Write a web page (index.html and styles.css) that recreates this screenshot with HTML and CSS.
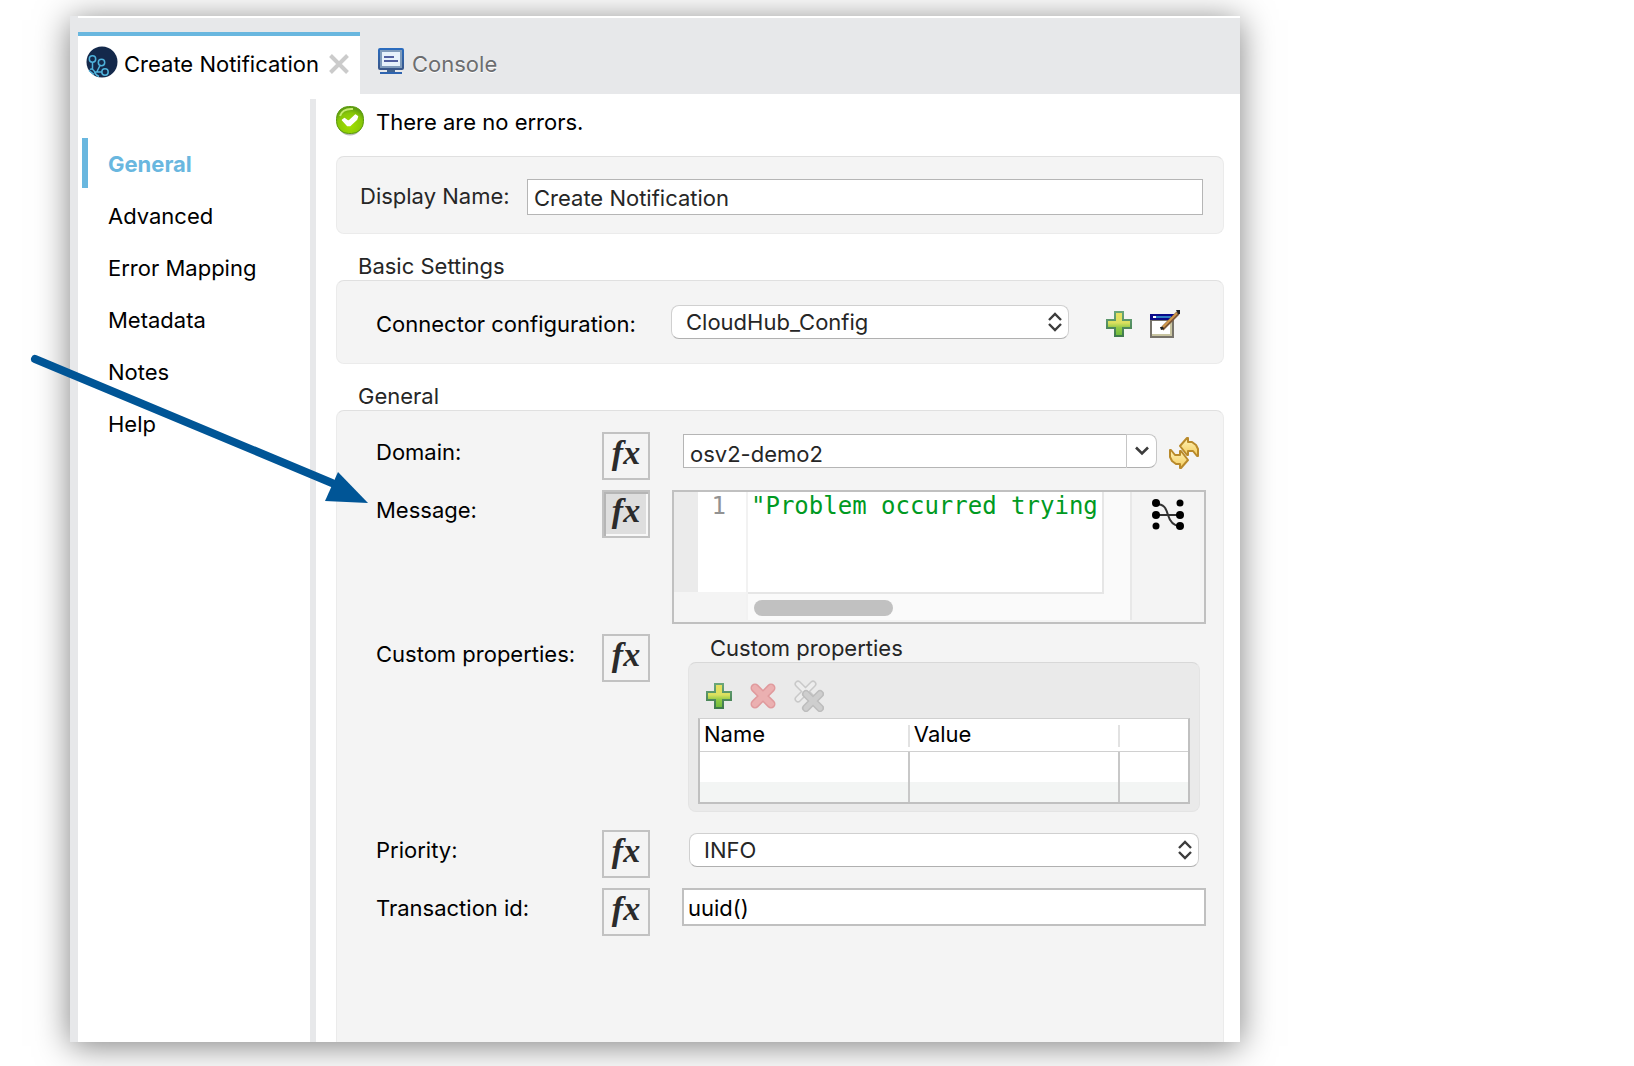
FILE: index.html
```
<!DOCTYPE html>
<html lang="en">
<head>
<meta charset="utf-8">
<title>Create Notification</title>
<link rel="stylesheet" href="styles.css">
</head>
<body>
<svg class="defs" width="0" height="0" aria-hidden="true">
  <defs>
    <linearGradient id="green" x1="0" y1="0" x2="0" y2="1"><stop offset="0" stop-color="#e8e060"/><stop offset=".45" stop-color="#dbe060"/><stop offset=".65" stop-color="#93cb47"/><stop offset="1" stop-color="#6cba3a"/></linearGradient>
    <linearGradient id="greenEdge" x1="0" y1="0" x2="0" y2="1"><stop offset="0" stop-color="#6aa679"/><stop offset="1" stop-color="#3f7a4c"/></linearGradient>
    <linearGradient id="screen" x1="0" y1="0" x2="0" y2="1"><stop offset="0" stop-color="#2a6cc0"/><stop offset="1" stop-color="#3a5688"/></linearGradient>
    <linearGradient id="gold" x1="0" y1="0" x2="0" y2="1"><stop offset="0" stop-color="#fff3b8"/><stop offset="1" stop-color="#f3cb5c"/></linearGradient>
    <radialGradient id="ok" cx=".5" cy=".7" r=".65"><stop offset="0" stop-color="#a2e000"/><stop offset=".7" stop-color="#88c708"/><stop offset="1" stop-color="#5d9c10"/></radialGradient>
    <symbol id="plus" viewBox="0 0 26 26"><path d="M9 1h8v8h8v8h-8v8H9v-8H1V9h8z" fill="url(#green)" stroke="url(#greenEdge)" stroke-width="2"/></symbol>
    <symbol id="updown" viewBox="0 0 14 20"><path d="M1 8l6-6 6 6M1 12l6 6 6-6" fill="none" stroke="#3c3c3c" stroke-width="2.4"/></symbol>
  </defs>
</svg>

<div class="window">
  <div class="tabs" role="tablist">
    <div class="tab tab-active" role="tab" aria-selected="true">
      <svg class="tab-logo" width="32" height="32" viewBox="0 0 32 32"><circle cx="16" cy="16" r="15.5" fill="#14294b"/><g fill="none" stroke="#4fb3dc" stroke-width="1.5"><circle cx="6.500" cy="13" r="3.200"/><circle cx="15.500" cy="16.500" r="3.200"/><circle cx="19" cy="26" r="3.200"/><path d="M6.500 16.200v7M14 19.500l-3 6M16 26H9M4 23.500c1.500-1 3.500 0 4.500 2 .5 2 2 4 4.500 5M3 24.500l5 4"/></g></svg>
      <span>Create Notification</span>
      <button class="close" aria-label="Close tab"><svg width="20" height="20" viewBox="0 0 20 20"><path d="M1.500 1.500l17 17M18.500 1.500l-17 17" stroke="#cbcbcb" stroke-width="4"/></svg></button>
    </div>
    <div class="tab tab-idle" role="tab" aria-selected="false">
      <svg width="26" height="26" viewBox="0 0 26 26"><rect width="26" height="22" rx="2" fill="url(#screen)"/><rect x="2" y="2" width="22" height="18" fill="#7f9bbb"/><rect x="4" y="4" width="18" height="14" fill="#e6f1fb"/><path d="M6 9h10M6 13h14" stroke="#5160a0" stroke-width="2"/><path d="M9 22h8v2H9z" fill="#42648f"/><path d="M2 24h22v2H2z" fill="#2f64b0"/></svg>
      <span>Console</span>
    </div>
  </div>

  <div class="body">
    <nav class="side">
      <a class="side-link current" href="#general">General</a>
      <a class="side-link" href="#advanced">Advanced</a>
      <a class="side-link" href="#errors">Error Mapping</a>
      <a class="side-link" href="#metadata">Metadata</a>
      <a class="side-link" href="#notes">Notes</a>
      <a class="side-link" href="#help">Help</a>
    </nav>

    <main class="main">
      <div class="status">
        <svg width="28" height="30" viewBox="0 0 28 30"><ellipse cx="14" cy="16" rx="13" ry="13.500" fill="#b9bdb4"/><rect x=".5" y=".5" width="27" height="27" rx="12" fill="url(#ok)" stroke="#5d9c10"/><path d="M4 10C6 4 11 2.500 17 3" fill="none" stroke="#c6ec70" stroke-width="2"/><path d="M6.500 14l2-1.500 4 3 7-6.500 2 1.500-1 3-6.500 6h-2.500z" fill="#fff" stroke="#fff" stroke-width="1.500" stroke-linejoin="round"/></svg>
        <span>There are no errors.</span>
      </div>

      <section class="box name-box">
        <label for="display">Display Name:</label>
        <input class="input" id="display" type="text" value="Create Notification">
      </section>

      <h2 class="legend">Basic Settings</h2>
      <section class="box config-box">
        <label class="config-label" for="config">Connector configuration:</label>
        <div class="select config-select">
          <select id="config"><option>CloudHub_Config</option></select>
          <svg width="14" height="20"><use href="#updown"/></svg>
        </div>
        <div class="config-tools">
          <button aria-label="Add configuration"><svg width="26" height="26"><use href="#plus"/></svg></button>
          <button aria-label="Edit configuration"><svg width="30" height="28" viewBox="0 0 30 28"><path d="M1 10h22v17H1z" fill="#fff" stroke="#77736a" stroke-width="2"/><path d="M2 24h20v2H2zM20 12h2v13h-2z" fill="#c8c4a0"/><path d="M0 4h24v6H0z" fill="#0a0a8a"/><path d="M6 6h15v2H6z" fill="#2f7fc4"/><path d="M3 6h3v2H3z" fill="#fff"/><path d="M12 19L28 3" stroke="#7c5636" stroke-width="4"/><path d="M13 17L27 3" stroke="#d29a4c" stroke-width="2"/><path d="M10 17l3 0 1 2-3 1zM26 0h4v4h-2z" fill="#222"/></svg></button>
        </div>
      </section>

      <h2 class="legend">General</h2>
      <section class="box general-box">
        <div class="row">
          <label for="domain">Domain:</label>
          <button class="fx" aria-label="Domain expression">fx</button>
          <div class="domain">
            <input id="domain" type="text" value="osv2-demo2">
            <button class="drop" aria-label="Show domains"><svg width="14" height="10" viewBox="0 0 14 10"><path d="M1 1.500l6 6 6-6" fill="none" stroke="#3c3c3c" stroke-width="2.600"/></svg></button>
            <button class="refresh" aria-label="Refresh domains"><svg width="30" height="32" viewBox="0 0 30 32"><g fill="url(#gold)" stroke="#b98a2b" stroke-width="2" stroke-linejoin="round"><path d="M11 9l7-8h1v4h4l4 3 2 4v7h-1l-4-5h-5v4h-1z"/><path d="M19 23l-7 8h-1v-4H7l-4-3-2-4v-7h1l4 5h5v-4h1z"/></g></svg></button>
          </div>
        </div>

        <div class="row">
          <label for="message">Message:</label>
          <button class="fx fx-on" aria-label="Message expression" aria-pressed="true">fx</button>
          <div class="editor">
            <div class="fold"></div>
            <div class="line-no">1</div>
            <div class="pane">
              <textarea id="message" wrap="off" spellcheck="false">"Problem occurred trying</textarea>
              <div class="scroll"><div class="thumb"></div></div>
            </div>
            <button class="map" aria-label="Open mapping"><svg width="32" height="32" viewBox="0 0 32 32"><path d="M4 5c8 0 10 4 12 11s5 11 12 11M4 16h24" fill="none" stroke="#333" stroke-width="2"/><g fill="#000"><circle cx="4" cy="4" r="4"/><circle cx="28" cy="4" r="3.500"/><circle cx="4" cy="16" r="4"/><circle cx="28" cy="16" r="4"/><circle cx="4" cy="27" r="3.500"/><circle cx="28" cy="27" r="4"/></g></svg></button>
          </div>
        </div>

        <div class="row">
          <span class="label">Custom properties:</span>
          <button class="fx" aria-label="Custom properties expression">fx</button>
          <div class="custom">
            <h3 class="custom-title">Custom properties</h3>
            <div class="custom-box">
              <div class="tools">
                <button aria-label="Add property"><svg width="26" height="26"><use href="#plus"/></svg></button>
                <button aria-label="Delete property"><svg width="26" height="26" viewBox="0 0 26 26"><g stroke-linecap="round"><path d="M5 5l16 16M21 5L5 21" stroke="#e09a9d" stroke-width="9"/><path d="M5 5l16 16M21 5L5 21" stroke="#ebb0b1" stroke-width="6"/></g></svg></button>
                <button aria-label="Delete all properties"><svg width="30" height="32" viewBox="0 0 30 32"><g stroke-linecap="round"><path d="M4 4l14 14M19 4L4 19" stroke="#c9c9c9" stroke-width="7"/><path d="M4 4l14 14M19 4L4 19" stroke="#ededed" stroke-width="4"/><path d="M12 14l14 14M26 14L12 28" stroke="#bdbdbd" stroke-width="8"/><path d="M12 14l14 14M26 14L12 28" stroke="#cecece" stroke-width="5"/></g></svg></button>
              </div>
              <table class="props">
                <thead><tr><th>Name</th><th>Value</th><th class="rest"></th></tr></thead>
                <tbody>
                  <tr class="first"><td></td><td></td><td></td></tr>
                  <tr class="second"><td></td><td></td><td></td></tr>
                </tbody>
              </table>
            </div>
          </div>
        </div>

        <div class="row">
          <label for="priority">Priority:</label>
          <button class="fx" aria-label="Priority expression">fx</button>
          <div class="select priority">
            <select id="priority"><option>INFO</option></select>
            <svg width="14" height="20"><use href="#updown"/></svg>
          </div>
        </div>

        <div class="row">
          <label for="transaction">Transaction id:</label>
          <button class="fx" aria-label="Transaction id expression">fx</button>
          <input class="transaction" id="transaction" type="text" value="uuid()">
        </div>
      </section>
    </main>
  </div>
</div>

<svg class="arrow" width="340" height="154" viewBox="0 0 340 154" aria-hidden="true"><path d="M5 5l297 124" stroke="#005596" stroke-width="8" stroke-linecap="round"/><path d="M308 118l30 31-43-2z" fill="#005596"/></svg>
</body>
</html>
```
FILE: styles.css
```
* { box-sizing: border-box; }

body {
  margin: 0;
  padding: 16px 394px 24px 70px;
  position: relative;
  background: #fff;
  color: #000;
  font-family: Inter, "Liberation Sans", sans-serif;
  font-size: 22px;
  line-height: 28px;
}

.defs, .arrow { position: absolute; }
.arrow { left: 30px; top: 354px; pointer-events: none; }

svg { display: block; flex: none; }
button { margin: 0; padding: 0; border: 0; background: none; color: inherit; }
input, select, textarea { margin: 0; font: inherit; border-radius: 0; min-width: 0; outline: 0; }
h2, h3 { margin: 0; font-size: 22px; font-weight: 400; color: #262626; }

.window {
  display: flex;
  flex-direction: column;
  min-height: calc(100vh - 40px);
  border-left: 8px solid #e7e8ea;
  background: #fff;
  box-shadow: 0 4px 32px rgba(0, 0, 0, .5);
}

/* Tabs */
.tabs {
  display: flex;
  height: 78px;
  padding-top: 14px;
  border-top: 2px solid #fff;
  background: #e7e8ea;
}
.tab { display: flex; align-items: center; padding-bottom: 2px; white-space: nowrap; }
.tab-active { width: 282px; padding-left: 8px; padding-right: 11px; border-top: 4px solid #69b7df; background: #fff; }
.tab-active span { margin-left: 6px; }
.tab-logo { margin-bottom: 4px; }
.close { margin-left: auto; }
.tab-idle { padding-left: 18px; gap: 8px; padding-top: 4px; color: #6c6d6f; text-shadow: 0 1px #fff; }
.tab-idle svg { margin-bottom: 6px; }

/* Body */
.body { display: flex; flex: 1; }
.side {
  display: flex;
  flex-direction: column;
  gap: 2px;
  width: 238px;
  margin-top: 5px;
  padding: 39px 0 0 4px;
  border-right: 6px solid #e7e8ea;
}
.side-link {
  height: 50px;
  padding-left: 20px;
  border-left: 6px solid transparent;
  color: #000;
  line-height: 52px;
  text-decoration: none;
}
.side-link.current { border-color: #69b7df; color: #69b7df; font-weight: 700; }

.main { display: flex; flex: 1; flex-direction: column; min-width: 0; padding: 12px 16px 0 20px; }
.status { display: flex; align-items: center; gap: 12px; height: 30px; margin-bottom: 20px; }
.status span { padding-top: 2px; }

.box { border: 1px solid #ebebeb; border-top-color: #e0e0e0; border-radius: 8px; background: #f4f4f4; }
.legend { margin-top: 18px; padding-left: 22px; line-height: 28px; }

.name-box { display: grid; grid-template-columns: 167px 1fr; align-items: center; padding: 22px 20px 18px 23px; color: #262626; }
.name-box label { padding-bottom: 2px; }
.input { height: 36px; padding: 2px 6px 0; border: 1px solid #b5b5b5; background: #fff; color: #262626; }

.config-box { display: flex; align-items: center; height: 84px; padding: 4px 43px 0 39px; }
.config-label { width: 295px; }
.config-select { flex: 1; margin-bottom: 4px; }
.config-tools { display: flex; gap: 18px; margin-left: 37px; }

.select { position: relative; }
.select select {
  display: block;
  width: 100%;
  height: 34px;
  padding: 0 32px 0 14px;
  border: 1px solid #d0d0d0;
  border-bottom-color: #b0b0b0;
  border-radius: 8px;
  appearance: none;
  background: #fff;
  color: #262626;
}
.select svg { position: absolute; top: 7px; right: 7px; pointer-events: none; }

.general-box {
  display: flex;
  flex: 1;
  flex-direction: column;
  gap: 10px;
  padding: 21px 17px 0 39px;
  border-bottom: 0;
  border-radius: 8px 8px 0 0;
}
.row { display: grid; grid-template-columns: 226px 48px minmax(0, 1fr); align-items: start; }
.row > label, .label { padding-top: 6px; }

.fx {
  width: 48px;
  height: 48px;
  padding-bottom: 6px;
  border: 2px solid #c2c2c2;
  background: #f4f4f4;
  color: #2b2b2b;
  font: italic 700 34px/36px "Liberation Serif", serif;
}
.fx-on { background: #dedede; box-shadow: inset 2px 2px #b5b5b5, inset -2px -2px #f8f8f8; }

.domain { display: flex; align-items: flex-start; margin: 2px 7px 0 33px; }
.domain input {
  flex: 1;
  height: 34px;
  padding: 6px 6px 0;
  border: 1px solid #b5b5b5;
  border-right: 0;
  background: #fff;
  color: #262626;
}
.drop {
  display: grid;
  place-items: center;
  width: 31px;
  height: 34px;
  border: 1px solid #c6c6c6;
  border-bottom-color: #b0b0b0;
  border-radius: 0 8px 8px 0;
  background: #fff;
}
.refresh { margin: 3px 0 0 12px; }

/* Expression editor */
.editor {
  display: grid;
  grid-template-columns: 24px 48px minmax(0, 1fr) 72px;
  height: 134px;
  margin-left: 22px;
  border: 2px solid #c0c0c0;
}
.fold { height: 100px; background: #ebebeb; }
.line-no {
  height: 100px;
  padding-right: 20px;
  background: #fff;
  color: #929292;
  font: 24px/28px "DejaVu Sans Mono", monospace;
  text-align: right;
}
.pane {
  height: 128px;
  padding-right: 26px;
  border-left: 2px solid #f2f2f2;
  border-right: 2px solid #e8e8e8;
  background: #fafafa;
}
.pane textarea {
  display: block;
  width: 100%;
  height: 102px;
  padding: 0 0 0 3px;
  border: solid #e6e6e6;
  border-width: 0 2px 2px 0;
  background: #fff;
  color: #009a22;
  font: 24px/28px "DejaVu Sans Mono", monospace;
  overflow: hidden;
  resize: none;
}
.scroll { padding: 6px 0 0 6px; }
.thumb { width: 139px; height: 16px; border-radius: 8px; background: #c1c1c1; }
.map { justify-self: center; align-self: start; margin-top: 7px; }

/* Custom properties */
.custom { margin: 0 6px 8px 38px; }
.custom-title { padding-left: 22px; }
.custom-box { height: 150px; padding: 17px 9px 0; border: 1px solid #e4e4e4; border-top-color: #d8d8d8; border-radius: 8px; background: #eaeaea; }
.tools { display: flex; align-items: center; gap: 18px; height: 32px; margin-bottom: 6px; padding-left: 8px; }
.props {
  width: 100%;
  border: 2px solid #c0c0c0;
  border-top: 1px solid #d0d0d0;
  border-spacing: 0;
  table-layout: fixed;
  background: #fff;
}
.props th { height: 33px; padding: 0 0 2px 4px; border-bottom: 1px solid #d0d0d0; font-weight: 400; line-height: 28px; text-align: left; background: linear-gradient(#e2e2e2, #e2e2e2) right 6px / 2px 22px no-repeat; }
.props th:not(.rest) { width: 43%; }
.props .rest { background: none; }
.props td { padding: 0; border-right: 2px solid #c8c8c8; }
.props td:last-child { border-right: 0; }
.first td { height: 30px; }
.second td { height: 20px; background: #f3f5f4; }

.priority { margin: 3px 7px 0 39px; }
.transaction { height: 38px; margin-left: 32px; padding: 2px 4px 0; border: 2px solid #c0c0c0; background: #fff; }
```
